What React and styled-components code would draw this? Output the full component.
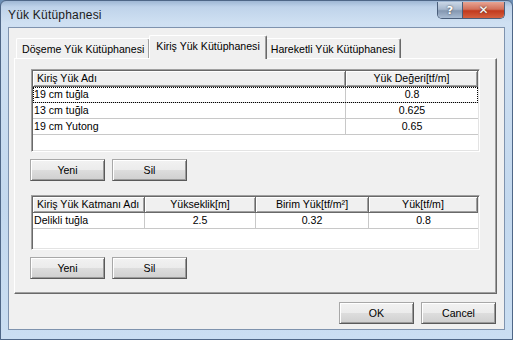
import React from 'react';
import styled, { createGlobalStyle } from 'styled-components';

const GlobalStyle = createGlobalStyle`
  html, body {
    margin: 0;
    padding: 0;
    background: #6d8fb5;
  }
  body {
    font-family: "Liberation Sans", Arial, sans-serif;
  }
`;

const Frame = styled.div`
  width: 513px;
  height: 340px;
  box-sizing: border-box;
  display: flex;
  flex-direction: column;
  border: 1px solid #4f6787;
  border-radius: 6px 6px 0 0;
  background: linear-gradient(180deg, #9fb7d4 0px, #bfd3ea 6px, #cfe0f2 22px, #c3d8ee 60%, #cadef2 100%);
  overflow: hidden;
`;

const TitleBar = styled.div`
  height: 26px;
  flex: none;
  display: flex;
  align-items: flex-start;
  justify-content: space-between;
  padding: 0 9px 0 7px;
`;

const Title = styled.span`
  font-size: 12px;
  color: #1b1b1b;
  margin-top: 7px;
  letter-spacing: 0.2px;
`;

const CaptionButtons = styled.div`
  display: flex;
  margin-top: 1px;
  margin-right: -2px;
  border: 1px solid #4a5e7a;
  border-top: none;
  border-radius: 0 0 5px 5px;
  overflow: hidden;
`;

const CaptionButton = styled.div`
  width: ${(p) => p.$w}px;
  height: 16px;
  display: flex;
  align-items: center;
  justify-content: center;
  color: #fff;
  font-family: "DejaVu Sans", sans-serif;
  font-weight: bold;
  font-size: ${(p) => (p.$close ? 12 : 11)}px;
  text-shadow: 0 0 2px #333;
  background: ${(p) =>
    p.$close
      ? 'linear-gradient(180deg, #e8a493 0%, #d2705a 45%, #c2391d 55%, #d5603f 100%)'
      : 'linear-gradient(180deg, #c9d6e6 0%, #a7b8ce 45%, #8497b1 55%, #a9bcd3 100%)'};
  & + & {
    border-left: 1px solid #4a5e7a;
  }
`;

const Client = styled.div`
  flex: none;
  margin: 0 7px 0 7px;
  height: 303px;
  box-sizing: border-box;
  background: #f0f0f0;
  border: 1px solid #7f93ae;
  display: flex;
  flex-direction: column;
  padding: 6px 7px 0 5px;
`;

const Tabs = styled.div`
  display: flex;
  align-items: flex-end;
  height: 24px;
  padding-left: 2px;
  position: relative;
  z-index: 1;
`;

const Tab = styled.div`
  height: ${(p) => (p.$active ? 24 : 20)}px;
  box-sizing: border-box;
  padding: 0 ${(p) => (p.$active ? 6 : 5)}px;
  margin: ${(p) => (p.$active ? '0 -2px -1px -1px' : '0')};
  display: flex;
  align-items: ${(p) => (p.$active ? 'flex-start' : 'center')};
  padding-top: ${(p) => (p.$active ? 4 : 1)}px;
  font-size: 10.6px;
  color: #000;
  background: #f0f0f0;
  border-top: 1px solid #fff;
  border-left: 1px solid #fff;
  border-right: 1px solid #696969;
  box-shadow: inset -1px 0 #a0a0a0;
  border-radius: 2px 2px 0 0;
  position: relative;
  z-index: ${(p) => (p.$active ? 2 : 1)};
  white-space: nowrap;
`;

const Panel = styled.div`
  height: 236px;
  box-sizing: border-box;
  border-top: 1px solid #fff;
  border-left: 1px solid #fff;
  border-right: 1px solid #696969;
  border-bottom: 1px solid #696969;
  box-shadow: inset -1px -1px #a0a0a0;
  padding: 10px 16px 0 16px;
  display: flex;
  flex-direction: column;
`;

const Grid = styled.div`
  height: ${(p) => p.$h}px;
  margin-top: ${(p) => p.$mt || 0}px;
  box-sizing: border-box;
  background: #fff;
  border-top: 1px solid #a0a0a0;
  border-left: 1px solid #a0a0a0;
  border-right: 1px solid #fff;
  border-bottom: 1px solid #fff;
  box-shadow: inset 1px 1px #696969, inset -1px -1px #e3e3e3;
  padding: 1px;
  display: flex;
  flex-direction: column;
`;

const HeaderRow = styled.div`
  display: grid;
  grid-template-columns: ${(p) => p.$cols};
`;

const HeaderCell = styled.div`
  height: 16px;
  box-sizing: border-box;
  background: #f0f0f0;
  border-right: 1px solid #696969;
  border-bottom: 1px solid #696969;
  box-shadow: inset 1px 1px #fff, inset -1px -1px #a0a0a0;
  font-size: 10.6px;
  line-height: 15px;
  color: #000;
  padding: 0 4px;
  text-align: ${(p) => (p.$left ? 'left' : 'center')};
  white-space: nowrap;
  overflow: hidden;
`;

const Row = styled.div`
  display: grid;
  grid-template-columns: ${(p) => p.$cols};
  outline: ${(p) => (p.$focused ? '1px dotted #000' : 'none')};
  outline-offset: -1px;
`;

const Cell = styled.div`
  height: 16px;
  box-sizing: border-box;
  border-right: 1px solid #c8c8c8;
  border-bottom: 1px solid #c8c8c8;
  font-size: 10.6px;
  line-height: 15px;
  color: #000;
  padding: 0 ${(p) => (p.$left ? '0 0 1px' : '2px')};
  text-align: ${(p) => (p.$left ? 'left' : 'center')};
  white-space: nowrap;
  &:last-child {
    border-right: none;
  }
`;

const ButtonRow = styled.div`
  display: flex;
  gap: 7px;
  justify-content: ${(p) => (p.$end ? 'flex-end' : 'flex-start')};
  margin-top: ${(p) => p.$mt}px;
  margin-left: ${(p) => (p.$end ? 0 : -1)}px;
  margin-right: ${(p) => (p.$end ? 1 : 0)}px;
`;

const Button = styled.div`
  width: 75px;
  height: 22px;
  box-sizing: border-box;
  display: flex;
  align-items: center;
  justify-content: center;
  font-size: 10.6px;
  color: #000;
  background: linear-gradient(180deg, #f2f2f2 0%, #ebebeb 50%, #dddddd 51%, #cfcfcf 100%);
  border-top: 1px solid #a8a8a8;
  border-left: 1px solid #a8a8a8;
  border-right: 1px solid #5a5a5a;
  border-bottom: 1px solid #5a5a5a;
  box-shadow: inset 1px 1px #fff, inset -1px -1px #9a9a9a;
`;

const loadCols = '313px 1fr';
const layerCols = '112px 111px 113px 1fr';

const loads = [
  ['19 cm tuğla', '0.8'],
  ['13 cm tuğla', '0.625'],
  ['19 cm Yutong', '0.65'],
];

const layers = [['Delikli tuğla', '2.5', '0.32', '0.8']];

export default function App() {
  return (
    <>
      <GlobalStyle />
      <Frame>
        <TitleBar>
          <Title>Yük Kütüphanesi</Title>
          <CaptionButtons>
            <CaptionButton $w={24}>?</CaptionButton>
            <CaptionButton $w={41} $close>✕</CaptionButton>
          </CaptionButtons>
        </TitleBar>
        <Client>
          <Tabs>
            <Tab>Döşeme Yük Kütüphanesi</Tab>
            <Tab $active>Kiriş Yük Kütüphanesi</Tab>
            <Tab>Hareketli Yük Kütüphanesi</Tab>
          </Tabs>
          <Panel>
            <Grid $h={83}>
              <HeaderRow $cols={loadCols}>
                <HeaderCell $left>Kiriş Yük Adı</HeaderCell>
                <HeaderCell>Yük Değeri[tf/m]</HeaderCell>
              </HeaderRow>
              {loads.map((r, i) => (
                <Row key={r[0]} $cols={loadCols} $focused={i === 0}>
                  <Cell $left>{r[0]}</Cell>
                  <Cell>{r[1]}</Cell>
                </Row>
              ))}
            </Grid>
            <ButtonRow $mt={7}>
              <Button>Yeni</Button>
              <Button>Sil</Button>
            </ButtonRow>
            <Grid $h={55} $mt={14}>
              <HeaderRow $cols={layerCols}>
                <HeaderCell $left>Kiriş Yük Katmanı Adı</HeaderCell>
                <HeaderCell>Yükseklik[m]</HeaderCell>
                <HeaderCell>Birim Yük[tf/m²]</HeaderCell>
                <HeaderCell>Yük[tf/m]</HeaderCell>
              </HeaderRow>
              {layers.map((r) => (
                <Row key={r[0]} $cols={layerCols}>
                  <Cell $left>{r[0]}</Cell>
                  <Cell>{r[1]}</Cell>
                  <Cell>{r[2]}</Cell>
                  <Cell>{r[3]}</Cell>
                </Row>
              ))}
            </Grid>
            <ButtonRow $mt={7}>
              <Button>Yeni</Button>
              <Button>Sil</Button>
            </ButtonRow>
          </Panel>
          <ButtonRow $mt={8} $end>
            <Button>OK</Button>
            <Button>Cancel</Button>
          </ButtonRow>
        </Client>
      </Frame>
    </>
  );
}
